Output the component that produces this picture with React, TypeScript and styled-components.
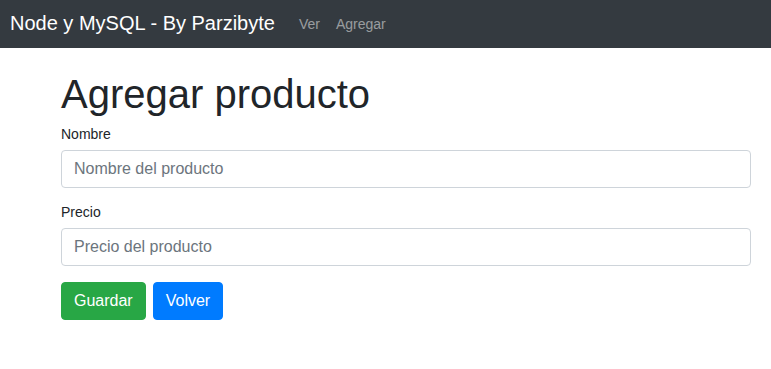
import React from 'react';
import styled, { createGlobalStyle } from 'styled-components';

const GlobalStyle = createGlobalStyle`
    * {
        box-sizing: border-box;
    }
    body {
        margin: 0;
        background: #fff;
        color: #212529;
        font-family: "Liberation Sans", Arial, sans-serif;
        font-size: 16px;
    }
`;

const App = () => {
    const links = ['Ver', 'Agregar'];

    return (
        <>
            <GlobalStyle />
            <Navbar>
                <Brand href="#">Node y MySQL - By Parzibyte</Brand>
                <NavList>
                    {links.map((link) => (
                        <NavLink key={link} href="#">{link}</NavLink>
                    ))}
                </NavList>
            </Navbar>
            <Container>
                <Title>Agregar producto</Title>
                <form onSubmit={(e) => e.preventDefault()}>
                    <FormGroup>
                        <Label htmlFor="nombre">Nombre</Label>
                        <Input id="nombre" placeholder="Nombre del producto" />
                    </FormGroup>
                    <FormGroup>
                        <Label htmlFor="precio">Precio</Label>
                        <Input id="precio" placeholder="Precio del producto" />
                    </FormGroup>
                    <Actions>
                        <Button type="submit" variant="success">Guardar</Button>
                        <Button type="button" variant="primary">Volver</Button>
                    </Actions>
                </form>
            </Container>
        </>
    );
};

export default App;

const Navbar = styled.nav`
    display: flex;
    align-items: center;
    height: 48px;
    padding: 0 10px;
    background-color: #343a40;
`;

const Brand = styled.a`
    margin-right: 16px;
    font-size: 20px;
    line-height: 30px;
    margin-top: -3px;
    color: #fff;
    text-decoration: none;
`;

const NavList = styled.div`
    display: flex;
`;

const NavLink = styled.a`
    padding: 0 8px;
    font-size: 14px;
    line-height: 21px;
    color: rgba(255, 255, 255, 0.5);
    text-decoration: none;
`;

const Container = styled.div`
    padding: 22px 20px 0 61px;
`;

const Title = styled.h1`
    margin: 0 0 8px;
    font-size: 40px;
    font-weight: 500;
    line-height: 48px;
    color: #212529;
`;

const FormGroup = styled.div`
    margin-bottom: 16px;
`;

const Label = styled.label`
    display: block;
    margin-bottom: 7px;
    font-size: 14px;
    line-height: 17px;
    color: #212529;
`;

const Input = styled.input`
    display: block;
    width: 100%;
    height: 38px;
    padding: 6px 12px;
    font-family: inherit;
    font-size: 16px;
    line-height: 24px;
    color: #495057;
    background: #fff;
    border: 1px solid #ced4da;
    border-radius: 4px;

    &::placeholder {
        color: #6c757d;
    }
`;

const Actions = styled.div`
    display: flex;
    gap: 7px;
`;

const Button = styled.button<{ variant: 'success' | 'primary' }>`
    height: 38px;
    padding: 6px 12px;
    font-family: inherit;
    font-size: 16px;
    line-height: 24px;
    color: #fff;
    border: 1px solid ${({ variant }) => (variant === 'success' ? '#28a745' : '#007bff')};
    border-radius: 4px;
    background-color: ${({ variant }) => (variant === 'success' ? '#28a745' : '#007bff')};
    cursor: pointer;
`;
